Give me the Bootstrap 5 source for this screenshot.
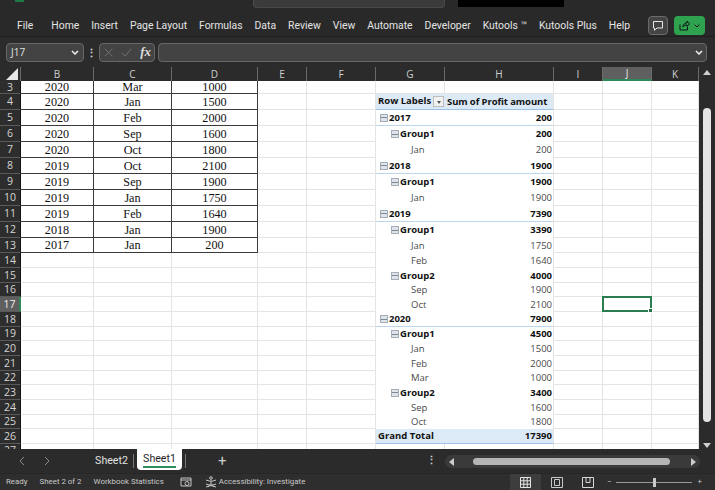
<!DOCTYPE html>
<html lang="en"><head><meta charset="utf-8"><title>Excel</title>
<link rel="stylesheet" href="https://cdn.jsdelivr.net/npm/bootstrap@5.3.0/dist/css/bootstrap.min.css">
<style>
html,body{margin:0;width:715px;height:490px;overflow:hidden;background:#2a2a2a;font-family:"Open Sans","Noto Sans",sans-serif}
.app{width:715px;height:490px}
.titlestrip{height:8px;background:#292929;overflow:hidden;flex:none}
.logo-bit{width:9px;height:2px;background:#1d7a45;margin-left:15px}
.searchbox{width:192px;height:8px;background:#3b3b3b;border-radius:0 0 4px 4px;margin-left:229px;border:1px solid #4a4a4a;border-top:0}
.blackbox{width:106px;height:7px;background:#000;margin-left:13px}
.ribbon{height:29px;background:#292929;flex:none;padding:7px 0 0 17px;color:#e4e4e4;font-family:Roboto,sans-serif;font-size:10.4px;border-bottom:1px solid #1e1e1e}
.ribbon span.tabname{margin-right:12px;white-space:nowrap}
.ribbon .first{margin-right:18px!important}
.rbtn{height:19px;border-radius:4px;display:flex;align-items:center;justify-content:center;flex:none}
.rbtn-c{width:20px;background:#444;border:1px solid #6b6b6b;margin-left:auto}
.rbtn-s{width:31px;background:#2ea24f;margin:0 10px 0 6px;gap:4px}
.fbar{height:30px;background:#2b2b2b;flex:none;padding:0 8px 0 6px}
.fbox{height:19px;background:#434343;border:1px solid #676767;border-radius:4px;color:#e2e2e2;font-size:10px}
.fname{width:78px;padding:0 4px 0 4px}
.fdots{width:15px;color:#ddd;font-weight:700;font-size:11px;text-align:center;line-height:1}
.fbtns{width:56px;padding:0 3px 0 4px;gap:8px}
.fx{font-family:"Liberation Serif",serif;font-style:italic;font-size:13px;font-weight:700;color:#ddd}
.finput{flex:1;margin-left:3px;padding:0 3px}
.sheetarea{height:382px;flex:none;overflow:hidden}
.sheetbox{width:699px;height:382px;overflow:hidden;background:#fff;flex:none}
table.xl{table-layout:fixed;width:699px;border-collapse:separate;border-spacing:0;background:#fff}
table.xl th,table.xl td{padding:0;box-sizing:border-box;overflow:hidden;white-space:nowrap;line-height:1;border-right:1px solid #e4e4e4;border-bottom:1px solid #e4e4e4}
table.xl thead th{height:14px;background:#2b2b2b;color:#cfcfcf;font-size:10px;font-weight:400;text-align:center;border-right:1px solid #6a6a6a;border-bottom:0}
table.xl thead th.selc{background:#5f5f5f;color:#e8e8e8;border-bottom:2px solid #2d8a57}
table.xl thead th.corner{position:relative;border-right:1px solid #6a6a6a}
.tri{position:absolute;right:2px;bottom:1px;width:0;height:0;border-left:12px solid transparent;border-bottom:12px solid #e6e6e6}
table.xl tbody th{background:#2d2d2d;color:#d6d6d6;font-size:10.5px;font-weight:400;text-align:center;border-right:1px solid #111;border-bottom:1px solid #5a5a5a}
table.xl tbody th.selr{background:#5f5f5f;color:#eee;border-right:2px solid #2d8a57}
.h13{height:13px}.h14{height:14px}.h15{height:15px}.h16{height:16px}
table.xl td.bd{border-right:1px solid #3a3a3a;border-bottom:1px solid #3a3a3a;text-align:center;font-family:"Liberation Serif",serif;font-size:12.2px;color:#111}
table.xl td.pv{border-right:0;border-bottom:0;font-size:9.5px;color:#4a4a4a}
table.xl td.pvr{border-right:1px solid #e4e4e4;text-align:right;padding-right:1px}
table.xl td.pb{font-weight:700;color:#111}
table.xl td.py{border-bottom:1px solid #bcd6ee}
table.xl td.ph{background:#dce9f6;border-bottom:1px solid #9cc2e5;color:#111;font-weight:700}
table.xl td.phl{text-align:left;padding-left:2px;letter-spacing:-.1px}
table.xl td.pl1{padding-left:4px}
table.xl td.pl2{padding-left:15px}
table.xl td.pl3{padding-left:35px}
table.xl td.pl0{padding-left:2px}
.minus{display:inline-block;width:8px;height:8px;margin-right:1px;vertical-align:-1px;border:1px solid #a3adb8;background:#dfe4ea linear-gradient(#7d8894,#7d8894) center/6px 1px no-repeat}
.filt{display:inline-block;width:11px;height:11px;margin-left:2px;vertical-align:middle;background:#f1f1f1;border:1px solid #bdbdbd;position:relative}
.filt::after{content:"";position:absolute;left:2.5px;top:4px;border-left:2.5px solid transparent;border-right:2.5px solid transparent;border-top:3px solid #555}
table.xl td.active{position:relative;overflow:visible}
.selbox{position:absolute;left:-1px;top:-1px;right:-1px;bottom:-1px;border:2px solid #2a7d50}
.handle{position:absolute;right:-3px;bottom:-3px;background:#217346;border:1px solid #fff;box-sizing:content-box;width:3px;height:3px}
.vscroll{width:16px;background:#2b2b2b;height:382px;position:relative}
.varr{position:absolute;left:3.500px;width:0;height:0;border-left:4.5px solid transparent;border-right:4.5px solid transparent}
.varr.up{top:3px;border-bottom:5px solid #cfcfcf}
.varr.dn{bottom:1px;border-top:5px solid #cfcfcf}
.vthumb{width:8px;height:314px;margin:41px 0 0 4px;background:#e3e3e3;border-radius:4px}
.tabbar{height:24px;background:#2b2b2b;flex:none;color:#ddd;font-family:Roboto,sans-serif;font-size:10.6px;position:relative}
.navch{width:25px;display:flex;justify-content:center}
.navwrap{margin-left:9px}
.sheet2{margin-left:32px;width:41px;text-align:center;color:#e2e2e2}
.tabsep{width:1px;height:14px;background:#777}
.sep1{margin-left:1px}
.sheet1{width:45px;height:21px;margin:0 3px;background:#fff;color:#1f1f1f;border-radius:0 0 4px 4px;text-align:center;position:relative;align-self:flex-start;line-height:20px}
.sheet1::after{content:"";position:absolute;left:6px;right:6px;bottom:2px;height:2px;background:#2f8f5f}
.plus{margin-left:32px;font-size:15px;color:#ccc;line-height:1}
.hdots{margin-left:auto;font-size:11px;font-weight:700;color:#ccc;width:14px;text-align:center}
.htrack{width:255px;height:13px;background:#3a3a3a;border-radius:7px;margin:0 15px 0 7px;position:relative;flex:none}
.hthumb{position:absolute;left:28px;top:3px;width:197px;height:7px;background:#b5b5b5;border-radius:4px}
.harr{position:absolute;top:3px;width:0;height:0;border-top:4px solid transparent;border-bottom:4px solid transparent}
.harr.l{left:4px;border-right:5px solid #ccc}
.harr.r{right:4px;border-left:5px solid #ccc}
.statusbar{height:17px;background:#2e2e2e;flex:none;color:#c9c9c9;font-family:Roboto,sans-serif;font-size:7.9px;white-space:nowrap;border-top:1px solid #262626}
.s1{margin-left:6px}.s2{margin-left:12px}.s3{margin-left:12px}.s4{margin-left:16px}.s5{margin-left:13px}.s6{margin-left:2px;margin-right:auto}
.viewbtn{width:31px;height:16px;display:flex;align-items:center;justify-content:center;flex:none}
.viewbtn.on{background:#3d3d3d}
.zminus{margin-left:4px}
.zslider{width:76px;height:1px;background:#9a9a9a;position:relative;margin:0 6px 0 4px;flex:none}
.zknob{position:absolute;left:37px;top:-4px;width:3px;height:9px;background:#c8c8c8}
.zend{margin-right:13px}
</style></head>
<body>
<div class="app d-flex flex-column">
 <div class="titlestrip d-flex align-items-start">
  <div class="logo-bit"></div><div class="searchbox"></div><div class="blackbox"></div>
 </div>
 <div class="ribbon d-flex align-items-center">
  <span class="tabname first">File</span><span class="tabname">Home</span><span class="tabname">Insert</span><span class="tabname">Page Layout</span><span class="tabname">Formulas</span><span class="tabname">Data</span><span class="tabname">Review</span><span class="tabname">View</span><span class="tabname">Automate</span><span class="tabname">Developer</span><span class="tabname">Kutools ™</span><span class="tabname">Kutools Plus</span><span class="tabname">Help</span>
  <div class="rbtn rbtn-c"><svg width="12" height="12" viewBox="0 0 12 12" fill="none" stroke="#e6e6e6"><path d="M1.5 1.5h9v6.5H5l-2.5 2.3V8h-1z"/></svg></div>
  <div class="rbtn rbtn-s"><svg width="11" height="11" viewBox="0 0 11 11" fill="none" stroke="#111"><path d="M1 4.5v5.5h7.5V7M4 7c0-2.5 1.5-4 4-4V1l2.5 2.8L8 6.500V5C6 5 5 5.500 4 7z"/></svg><svg width="6" height="4" viewBox="0 0 6 4" fill="none" stroke="#111"><path d="M.7.700 3 3 5.300.7"/></svg></div>
 </div>
 <div class="fbar d-flex align-items-center">
  <div class="fbox fname d-flex align-items-center justify-content-between"><span>J17</span><svg width="8" height="5" viewBox="0 0 8 5" fill="none" stroke="#eee" stroke-width="1.5"><path d="M1 1l3 3 3-3"/></svg></div>
  <div class="fdots">⋮</div>
  <div class="fbox fbtns d-flex align-items-center">
   <svg width="11" height="11" viewBox="0 0 11 11" fill="none" stroke="#7d7d7d"><path d="M1 1l9 9M10 1l-9 9"/></svg>
   <svg width="13" height="11" viewBox="0 0 13 11" fill="none" stroke="#7d7d7d"><path d="M1 6l4 4 7-9"/></svg>
   <span class="fx">fx</span>
  </div>
  <div class="fbox finput d-flex align-items-center justify-content-end"><svg width="8" height="5" viewBox="0 0 8 5" fill="none" stroke="#eee" stroke-width="1.5"><path d="M1 1l3 3 3-3"/></svg></div>
 </div>
 <div class="sheetarea d-flex">
  <div class="sheetbox">
  <table class="xl">
   <colgroup><col style="width:21px"><col style="width:73px"><col style="width:78px"><col style="width:86px"><col style="width:49px"><col style="width:69px"><col style="width:69px"><col style="width:109px"><col style="width:49px"><col style="width:49px"><col style="width:47px"></colgroup>
   <thead><tr><th class="corner"><span class="tri"></span></th><th>B</th><th>C</th><th>D</th><th>E</th><th>F</th><th>G</th><th>H</th><th>I</th><th class="selc">J</th><th>K</th></tr></thead>
   <tbody>
    <tr class="h13"><th>3</th><td class="bd">2020</td><td class="bd">Mar</td><td class="bd">1000</td><td></td><td></td><td></td><td></td><td></td><td></td><td></td></tr>
    <tr class="h16"><th>4</th><td class="bd">2020</td><td class="bd">Jan</td><td class="bd">1500</td><td></td><td></td><td class="pv ph pl0">Row Labels<span class="filt"></span></td><td class="pv ph pvr phl">Sum of Profit amount</td><td></td><td></td><td></td></tr>
    <tr class="h16"><th>5</th><td class="bd">2020</td><td class="bd">Feb</td><td class="bd">2000</td><td></td><td></td><td class="pv pb py pl1"><span class="minus"></span>2017</td><td class="pv pvr pb py">200</td><td></td><td></td><td></td></tr>
    <tr class="h16"><th>6</th><td class="bd">2020</td><td class="bd">Sep</td><td class="bd">1600</td><td></td><td></td><td class="pv pb pl2"><span class="minus"></span>Group1</td><td class="pv pvr pb">200</td><td></td><td></td><td></td></tr>
    <tr class="h16"><th>7</th><td class="bd">2020</td><td class="bd">Oct</td><td class="bd">1800</td><td></td><td></td><td class="pv pl3">Jan</td><td class="pv pvr">200</td><td></td><td></td><td></td></tr>
    <tr class="h16"><th>8</th><td class="bd">2019</td><td class="bd">Oct</td><td class="bd">2100</td><td></td><td></td><td class="pv pb py pl1"><span class="minus"></span>2018</td><td class="pv pvr pb py">1900</td><td></td><td></td><td></td></tr>
    <tr class="h16"><th>9</th><td class="bd">2019</td><td class="bd">Sep</td><td class="bd">1900</td><td></td><td></td><td class="pv pb pl2"><span class="minus"></span>Group1</td><td class="pv pvr pb">1900</td><td></td><td></td><td></td></tr>
    <tr class="h16"><th>10</th><td class="bd">2019</td><td class="bd">Jan</td><td class="bd">1750</td><td></td><td></td><td class="pv pl3">Jan</td><td class="pv pvr">1900</td><td></td><td></td><td></td></tr>
    <tr class="h16"><th>11</th><td class="bd">2019</td><td class="bd">Feb</td><td class="bd">1640</td><td></td><td></td><td class="pv pb py pl1"><span class="minus"></span>2019</td><td class="pv pvr pb py">7390</td><td></td><td></td><td></td></tr>
    <tr class="h16"><th>12</th><td class="bd">2018</td><td class="bd">Jan</td><td class="bd">1900</td><td></td><td></td><td class="pv pb pl2"><span class="minus"></span>Group1</td><td class="pv pvr pb">3390</td><td></td><td></td><td></td></tr>
    <tr class="h15"><th>13</th><td class="bd">2017</td><td class="bd">Jan</td><td class="bd">200</td><td></td><td></td><td class="pv pl3">Jan</td><td class="pv pvr">1750</td><td></td><td></td><td></td></tr>
    <tr class="h15"><th>14</th><td></td><td></td><td></td><td></td><td></td><td class="pv pl3">Feb</td><td class="pv pvr">1640</td><td></td><td></td><td></td></tr>
    <tr class="h15"><th>15</th><td></td><td></td><td></td><td></td><td></td><td class="pv pb pl2"><span class="minus"></span>Group2</td><td class="pv pvr pb">4000</td><td></td><td></td><td></td></tr>
    <tr class="h14"><th>16</th><td></td><td></td><td></td><td></td><td></td><td class="pv pl3">Sep</td><td class="pv pvr">1900</td><td></td><td></td><td></td></tr>
    <tr class="h15"><th class="selr">17</th><td></td><td></td><td></td><td></td><td></td><td class="pv pl3">Oct</td><td class="pv pvr">2100</td><td></td><td class="active"><span class="selbox"><span class="handle"></span></span></td><td></td></tr>
    <tr class="h15"><th>18</th><td></td><td></td><td></td><td></td><td></td><td class="pv pb py pl1"><span class="minus"></span>2020</td><td class="pv pvr pb py">7900</td><td></td><td></td><td></td></tr>
    <tr class="h14"><th>19</th><td></td><td></td><td></td><td></td><td></td><td class="pv pb pl2"><span class="minus"></span>Group1</td><td class="pv pvr pb">4500</td><td></td><td></td><td></td></tr>
    <tr class="h15"><th>20</th><td></td><td></td><td></td><td></td><td></td><td class="pv pl3">Jan</td><td class="pv pvr">1500</td><td></td><td></td><td></td></tr>
    <tr class="h15"><th>21</th><td></td><td></td><td></td><td></td><td></td><td class="pv pl3">Feb</td><td class="pv pvr">2000</td><td></td><td></td><td></td></tr>
    <tr class="h14"><th>22</th><td></td><td></td><td></td><td></td><td></td><td class="pv pl3">Mar</td><td class="pv pvr">1000</td><td></td><td></td><td></td></tr>
    <tr class="h15"><th>23</th><td></td><td></td><td></td><td></td><td></td><td class="pv pb pl2"><span class="minus"></span>Group2</td><td class="pv pvr pb">3400</td><td></td><td></td><td></td></tr>
    <tr class="h15"><th>24</th><td></td><td></td><td></td><td></td><td></td><td class="pv pl3">Sep</td><td class="pv pvr">1600</td><td></td><td></td><td></td></tr>
    <tr class="h14"><th>25</th><td></td><td></td><td></td><td></td><td></td><td class="pv pl3">Oct</td><td class="pv pvr">1800</td><td></td><td></td><td></td></tr>
    <tr class="h15"><th>26</th><td></td><td></td><td></td><td></td><td></td><td class="pv ph pl0">Grand Total</td><td class="pv ph pvr">17390</td><td></td><td></td><td></td></tr>
    <tr class="h14"><th>27</th><td></td><td></td><td></td><td></td><td></td><td></td><td></td><td></td><td></td><td></td></tr>
   </tbody>
  </table>
  </div>
  <div class="vscroll"><span class="varr up"></span><div class="vthumb"></div><span class="varr dn"></span></div>
 </div>
 <div class="tabbar d-flex align-items-center">
  <div class="navwrap d-flex"><div class="navch"><svg width="6" height="10" viewBox="0 0 6 10" fill="none" stroke="#8a8a8a"><path d="M5 1 1 5l4 4"/></svg></div><div class="navch"><svg width="6" height="10" viewBox="0 0 6 10" fill="none" stroke="#8a8a8a"><path d="M1 1l4 4-4 4"/></svg></div></div>
  <div class="sheet2">Sheet2</div>
  <div class="tabsep sep1"></div>
  <div class="sheet1">Sheet1</div>
  <div class="tabsep"></div>
  <div class="plus">+</div>
  <div class="hdots">⋮</div>
  <div class="htrack"><span class="harr l"></span><span class="hthumb"></span><span class="harr r"></span></div>
 </div>
 <div class="statusbar d-flex align-items-center">
  <span class="s1">Ready</span><span class="s2">Sheet 2 of 2</span><span class="s3">Workbook Statistics</span>
  <svg class="s4" width="12" height="12" viewBox="0 0 12 12" fill="none" stroke="#c4c4c4"><path d="M1 2h10v8H1zM1 4h10"/><circle cx="7" cy="7.500" r="2"/></svg>
  <svg class="s5" width="12" height="12" viewBox="0 0 12 12" fill="none" stroke="#c4c4c4"><circle cx="6" cy="2" r="1.300"/><path d="M1 4l3 1h4l3-1M6 5v2.500M6 7.500 3 11M6 7.500 9 11M1 8l10 3M11 8 1 11"/></svg>
  <span class="s6">Accessibility: Investigate</span>
  <div class="viewbtn on"><svg width="11" height="11" viewBox="0 0 11 11" fill="none" stroke="#e4e4e4"><path d="M.5 .5h10v10H.5zM.5 3.800h10M.5 7.200h10M3.800 .5v10M7.200 .5v10"/></svg></div>
  <div class="viewbtn"><svg width="12" height="11" viewBox="0 0 12 11" fill="none" stroke="#c8c8c8"><path d="M.5 .5h11v10H.5zM3.500 2.500h5v6h-5z"/></svg></div>
  <div class="viewbtn"><svg width="12" height="11" viewBox="0 0 12 11" fill="none" stroke="#d8d8d8"><path d="M.5 .5h11v10H.5zM4 .5v5h4v-5"/></svg></div>
  <span class="zminus">−</span><div class="zslider"><span class="zknob"></span></div><span class="zend">+</span>
 </div>
</div>
<script src="https://cdn.jsdelivr.net/npm/bootstrap@5.3.0/dist/js/bootstrap.bundle.min.js"></script>
</body></html>
